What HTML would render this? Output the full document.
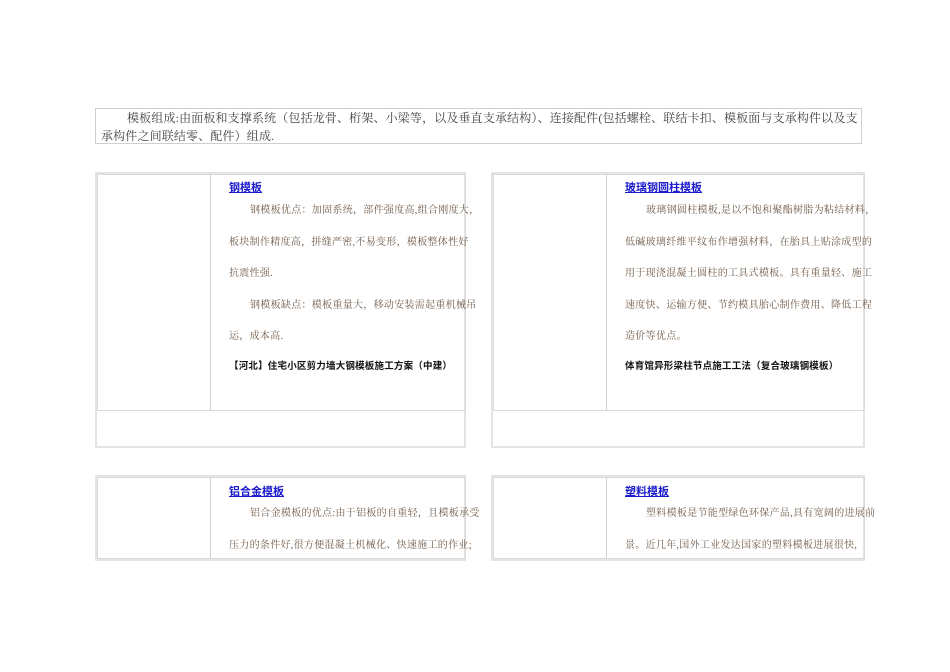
<!DOCTYPE html>
<html><head><meta charset="utf-8"><style>
body{margin:0;width:950px;height:672px;background:#fff;position:relative;overflow:hidden;font-family:"Liberation Serif","Noto Serif CJK SC",serif}
.a{position:absolute;white-space:nowrap}
.box{position:absolute;border:1px solid #cfcfcf;box-sizing:border-box}
.in{position:absolute;border:1px solid #dadada;box-sizing:border-box}
.t{font-family:"Liberation Sans","Noto Sans CJK SC",sans-serif;font-weight:bold;font-size:11px;color:#1a1acc;text-decoration:underline}
.p{font-size:10px;color:#6e5a48;letter-spacing:0.3px}
.b{font-family:"Liberation Sans","Noto Sans CJK SC",sans-serif;font-weight:bold;font-size:9.5px;color:#111;letter-spacing:0.2px}
.top{font-size:12px;color:#444;letter-spacing:0.15px}
</style></head><body>
<div class="box" style="left:95px;top:108px;width:767px;height:36px"></div>
<div class="a top" style="left:127px;top:109px">模板组成:由面板和支撑系统（包括龙骨、桁架、小梁等，以及垂直支承结构）、连接配件(包括螺栓、联结卡扣、模板面与支承构件以及支</div>
<div class="a top" style="left:101px;top:127px">承构件之间联结零、配件）组成.</div>

<div class="box" style="left:95px;top:172px;width:371px;height:276px;border-width:2px;border-color:#e4e4e4"></div>
<div class="in" style="left:97px;top:174px;width:114px;height:237px"></div>
<div class="in" style="left:210px;top:174px;width:256px;height:237px;border-left-color:#d0d0d0"></div>
<div class="a t" style="left:229px;top:179px">钢模板</div>
<div class="a p" style="left:250px;top:201px">钢模板优点：加固系统，部件强度高,组合刚度大，</div>
<div class="a p" style="left:229px;top:233px">板块制作精度高，拼缝严密,不易变形，模板整体性好</div>
<div class="a p" style="left:229px;top:264px">抗震性强.</div>
<div class="a p" style="left:250px;top:296px">钢模板缺点：模板重量大，移动安装需起重机械吊</div>
<div class="a p" style="left:229px;top:327px">运，成本高.</div>
<div class="a b" style="left:229px;top:358px">【河北】住宅小区剪力墙大钢模板施工方案（中建）</div>

<div class="box" style="left:491px;top:172px;width:374px;height:276px;border-width:2px;border-color:#e4e4e4"></div>
<div class="in" style="left:493px;top:174px;width:114px;height:237px"></div>
<div class="in" style="left:606px;top:174px;width:259px;height:237px;border-left-color:#d0d0d0"></div>
<div class="a t" style="left:625px;top:179px">玻璃钢圆柱模板</div>
<div class="a p" style="left:646px;top:201px">玻璃钢圆柱模板,是以不饱和聚酯树脂为粘结材料，</div>
<div class="a p" style="left:625px;top:233px">低碱玻璃纤维平纹布作增强材料，在胎具上贴涂成型的</div>
<div class="a p" style="left:625px;top:264px">用于现浇混凝土圆柱的工具式模板。具有重量轻、施工</div>
<div class="a p" style="left:625px;top:296px">速度快、运输方便、节约模具胎心制作费用、降低工程</div>
<div class="a p" style="left:625px;top:327px">造价等优点。</div>
<div class="a b" style="left:625px;top:358px">体育馆异形梁柱节点施工工法（复合玻璃钢模板）</div>

<div class="box" style="left:95px;top:475px;width:371px;height:86px;border-width:2px;border-color:#e4e4e4"></div>
<div class="in" style="left:97px;top:477px;width:114px;height:82px"></div>
<div class="in" style="left:210px;top:477px;width:256px;height:82px;border-left-color:#d0d0d0"></div>
<div class="a t" style="left:229px;top:483px">铝合金模板</div>
<div class="a p" style="left:250px;top:504px">铝合金模板的优点:由于铝板的自重轻，且模板承受</div>
<div class="a p" style="left:229px;top:536px">压力的条件好,很方便混凝土机械化、快速施工的作业;</div>

<div class="box" style="left:491px;top:475px;width:374px;height:86px;border-width:2px;border-color:#e4e4e4"></div>
<div class="in" style="left:493px;top:477px;width:114px;height:82px"></div>
<div class="in" style="left:606px;top:477px;width:259px;height:82px;border-left-color:#d0d0d0"></div>
<div class="a t" style="left:625px;top:483px">塑料模板</div>
<div class="a p" style="left:646px;top:504px">塑料模板是节能型绿色环保产品,具有宽阔的进展前</div>
<div class="a p" style="left:625px;top:536px">景。近几年,国外工业发达国家的塑料模板进展很快,</div>
</body></html>
